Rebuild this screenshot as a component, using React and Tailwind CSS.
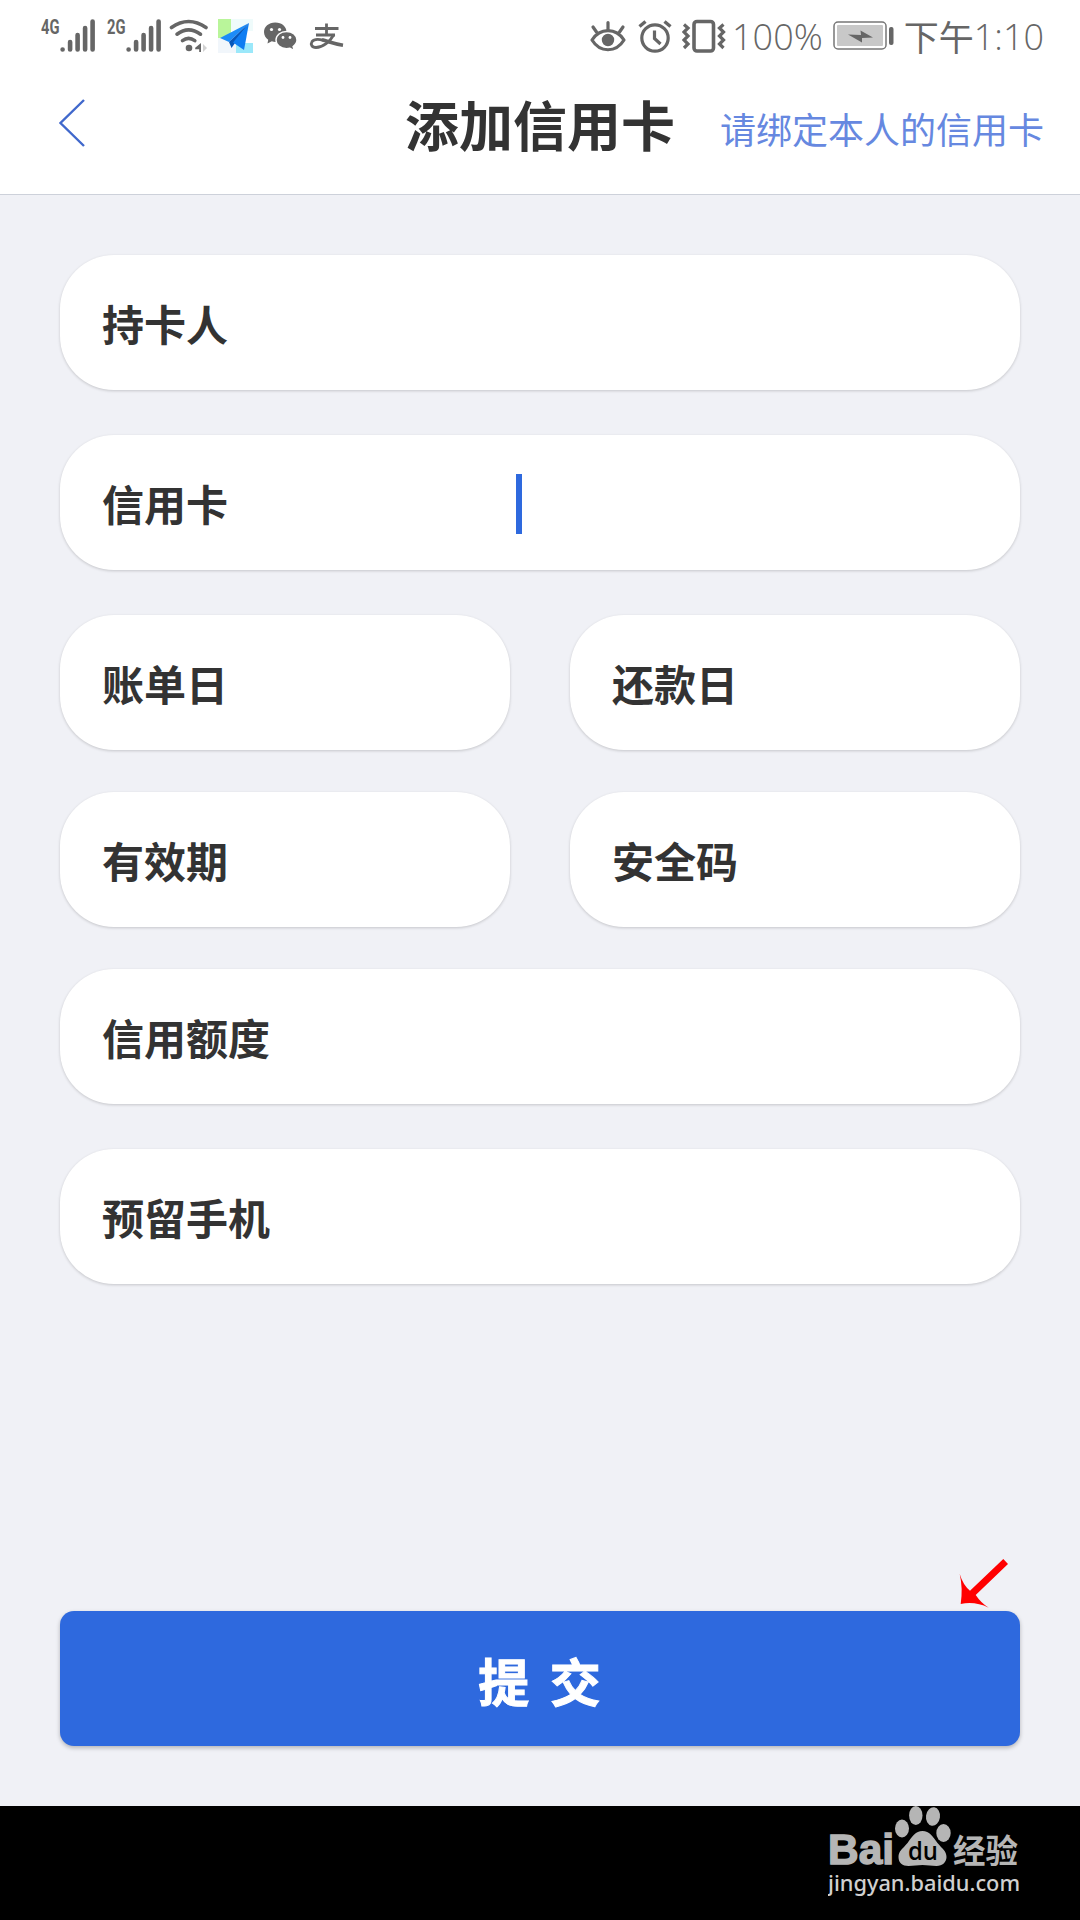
const CJK = "font-['Noto_Sans_CJK_SC',sans-serif]";
const G = "#666666";

function Signal({ label }) {
  return (
    <svg className="overflow-visible" width="56" height="36" viewBox="0 0 56 36" fill="none">
      <text x="0" y="16" fontFamily="Roboto, sans-serif" fontSize="21" fontWeight="700" fill={G} textLength="18.5" lengthAdjust="spacingAndGlyphs">
        {label}
      </text>
      <g stroke={G} strokeWidth="4.6" strokeLinecap="round">
        <path d="M21.600 31.500v0M29.100 24v7.500M36.600 17v14.500M44.100 10v21.500M51.600 3.500v28" />
      </g>
    </svg>
  );
}

function Wifi() {
  return (
    <svg width="40" height="36" viewBox="0 0 40 36" fill="none">
      <g stroke={G} strokeWidth="3.6" strokeLinecap="round">
        <path d="M2.5 9.5Q19.500 -2.500 37 9.500" />
        <path d="M8 16.200Q19.500 7.500 31.500 16.200" />
        <path d="M13.500 22.600Q19.500 18 25.800 22.600" />
      </g>
      <circle cx="20" cy="30" r="3.300" fill={G} />
      <path d="M32 25v9h-1.800v-2.800h-4v-1.500z" fill={G} />
      <path d="M34 26l4 4-4 4z" fill="#d2d2d2" />
    </svg>
  );
}

function Plane() {
  return (
    <svg width="36" height="36" viewBox="0 0 36 36">
      <rect x="0" y="1" width="13" height="19" fill="#b9f59a" />
      <rect x="13" y="1" width="22" height="12" fill="#effbfb" />
      <rect x="0" y="20" width="18" height="15" fill="#f1f6fb" />
      <rect x="18" y="25" width="17" height="10" fill="#9be8fa" />
      <path d="M31 5L2 20l9 4z" fill="#1c8cf8" />
      <path d="M31 5L11 24l2.500 6 3.500-5z" fill="#0757b8" />
      <path d="M31 5L15 24.500l11 7.500z" fill="#0f7df2" />
    </svg>
  );
}

function WeChat() {
  return (
    <svg width="36" height="32" viewBox="0 0 36 32">
      <path fill={G} d="M12.200 2.500C5.600 2.500 1 6.900 1 12c0 3.300 1.700 6 4.200 7.800L4.500 23.500l4.300-2.200c1.200.4 2.400.6 3.600.6C19 21.900 23.500 17.300 23.500 12S19 2.500 12.200 2.500z" />
      <path fill={G} stroke="#fff" strokeWidth="1.400" d="M23.500 11.500c-6 0-10.500 3.900-10.500 8.600 0 4.700 4.500 8.600 10.500 8.600 1.200 0 2.400-.2 3.500-.5l4.200 2.400-1.100-4.100c2.300-1.600 3.900-3.900 3.900-6.400 0-4.700-4.500-8.600-10.500-8.600z" />
      <g fill="#fff">
        <circle cx="8.500" cy="9.500" r="1.600" /><circle cx="16.500" cy="9.500" r="1.600" />
        <circle cx="20" cy="17.500" r="1.400" /><circle cx="27" cy="17.500" r="1.400" />
      </g>
    </svg>
  );
}

function Alipay() {
  return (
    <svg width="36" height="30" viewBox="0 0 36 30" fill="none" stroke={G} strokeWidth="2.800">
      <path d="M6 7.500h23.500M17.500 2.500v12M7 14h19" />
      <path d="M25 13.500C21 20.500 14 26.500 7 26.500 2.500 26.500 1.500 23 3 20.700 5 18 9.500 18 14 19.200" />
      <path d="M13 18.800c7 1.800 12 4 21 5.400" strokeWidth="3.600" />
    </svg>
  );
}

function Eye() {
  return (
    <svg width="36" height="34" viewBox="0 0 36 34" fill="none" stroke={G} strokeWidth="3.200" strokeLinecap="round" strokeLinejoin="round">
      <path d="M2 21C10 8.500 26 8.500 34 21 26 34 10 34 2 21z" />
      <path d="M18 3.500v7M3 8l3.500 5M33 8l-3.500 5" />
      <circle cx="18" cy="21" r="4.600" fill={G} />
    </svg>
  );
}

function Alarm() {
  return (
    <svg width="34" height="34" viewBox="0 0 34 34" fill="none" stroke={G} strokeWidth="3.200">
      <circle cx="17" cy="19" r="13.200" />
      <path d="M16.500 11.500v8l6 5.500" />
      <path d="M1.500 7.500l6-5M32.500 7.500l-6-5" strokeWidth="3.400" />
    </svg>
  );
}

function Vibrate() {
  return (
    <svg width="44" height="34" viewBox="0 0 44 34" fill="none" stroke={G} strokeWidth="3.200">
      <rect x="12" y="2.500" width="19.500" height="29.500" rx="3" strokeWidth="3.600" />
      <path d="M2 5.500l4 3.500-4 4 4 4-4 4 4 4-4 4M41.500 5.500l-4 3.500 4 4-4 4 4 4-4 4 4 4" />
    </svg>
  );
}

function Battery() {
  return (
    <svg width="62" height="30" viewBox="0 0 62 30">
      <rect x="1" y="1" width="52" height="27" rx="4" fill="#fff" stroke="#777" strokeWidth="1.500" />
      <rect x="4" y="4" width="46" height="21" rx="1" fill="#c8c8c8" />
      <path d="M15 13.500l13 .5-.5-4.500 12.500 7-11 .5 0 4.500z" fill={G} />
      <rect x="56" y="6" width="4.500" height="18" rx="2" fill={G} />
    </svg>
  );
}

function Field({ label, cursor }) {
  return (
    <div className="flex h-[135px] min-w-0 flex-1 items-center rounded-[54px] bg-white pl-[42px] shadow-[0_1px_3px_rgba(0,0,0,0.18)]">
      <span className="w-[414px] min-w-0 text-[42px] leading-none font-bold text-[#333]">{label}</span>
      {cursor && <span className="mt-[2px] h-[60px] w-[6px] bg-[#2e69de]" />}
    </div>
  );
}

function Watermark() {
  return (
    <svg width="200" height="94" viewBox="0 0 200 94">
      <g fill="#b5b5b5">
        <text x="0" y="58" fontFamily="'Liberation Sans', sans-serif" fontSize="43" fontWeight="700" stroke="#b5b5b5" strokeWidth="1.500" textLength="66" lengthAdjust="spacingAndGlyphs">Bai</text>
        <ellipse cx="74" cy="22.500" rx="7" ry="9" />
        <ellipse cx="87.800" cy="9.500" rx="6.700" ry="9.500" />
        <ellipse cx="105" cy="10.500" rx="7" ry="9.300" transform="rotate(8 105 10.500)" />
        <ellipse cx="115.500" cy="27" rx="7.200" ry="9" />
        <path d="M94.500 25c-7 0-10 5-15 12-5 6-9 8-9 14 0 6 4 9 10 9 5 0 9-1 14-1s9 1 14 1c6 0 10-4 10-9 0-6-4-8-9-14-5-7-8-12-15-12z" />
        <text x="125" y="57" fontFamily="'Noto Sans CJK SC', sans-serif" fontSize="33" fontWeight="700" textLength="65" lengthAdjust="spacingAndGlyphs">经验</text>
      </g>
      <text x="80" y="54" fontFamily="'Open Sans', sans-serif" fontSize="25" fontWeight="600" fill="#000" textLength="30" lengthAdjust="spacingAndGlyphs">du</text>
      <text x="0" y="84.500" fontFamily="'Noto Sans', sans-serif" fontSize="22" fontWeight="500" fill="#d0d0d0" textLength="192" lengthAdjust="spacingAndGlyphs">jingyan.baidu.com</text>
    </svg>
  );
}

export default function App() {
  return (
    <div className={"flex h-[1920px] w-[1080px] flex-col overflow-hidden bg-[#f0f1f6] " + CJK}>
      <div className="flex h-[72px] items-center bg-white pr-[36px] pl-[41px]">
        <div className="flex items-center">
          <Signal label="4G" />
          <div className="ml-[10px]"><Signal label="2G" /></div>
          <div className="ml-[6px]"><Wifi /></div>
          <div className="ml-[9px]"><Plane /></div>
          <div className="ml-[9px]"><WeChat /></div>
          <div className="ml-[10px]"><Alipay /></div>
        </div>
        <div className="ml-auto flex items-center text-[36px] leading-none text-[#666]">
          <Eye />
          <div className="ml-[12px]"><Alarm /></div>
          <div className="ml-[10px]"><Vibrate /></div>
          <span className="ml-[6px] pt-[2px] font-['Open_Sans',sans-serif] font-light">100%</span>
          <div className="ml-[10px]"><Battery /></div>
          <span className="ml-[9px] pb-[2px] text-[35px]">下午</span>
          <span className="pt-[2px] font-['Open_Sans',sans-serif] font-light">1:10</span>
        </div>
      </div>

      <div className="grid h-[123px] grid-cols-[400px_1fr_auto] border-b border-[#cdd1da] bg-white pr-[36px]">
        <svg className="mt-[26px] ml-[58px]" width="30" height="52" viewBox="0 0 30 52" fill="none">
          <path d="M26 2L2.500 25 26 48" stroke="#4068cc" strokeWidth="2.400" />
        </svg>
        <h1 className="pt-[25px] pl-[5px] text-[54px] leading-[54px] font-bold text-[#333]">添加信用卡</h1>
        <span className="pt-[38px] text-[36px] leading-[36px] text-[#6688e0]">请绑定本人的信用卡</span>
      </div>

      <div className="flex flex-1 flex-col px-[60px] pt-[60px]">
        <div className="mb-[45px] flex"><Field label="持卡人" /></div>
        <div className="mb-[45px] flex"><Field label="信用卡" cursor /></div>
        <div className="mb-[42px] grid grid-cols-2 gap-[60px]"><Field label="账单日" /><Field label="还款日" /></div>
        <div className="mb-[42px] grid grid-cols-2 gap-[60px]"><Field label="有效期" /><Field label="安全码" /></div>
        <div className="mb-[45px] flex"><Field label="信用额度" /></div>
        <div className="flex"><Field label="预留手机" /></div>
        <button className="relative mt-auto mb-[60px] flex h-[135px] items-center justify-center rounded-[14px] bg-[#2e69de] text-[51px] leading-none font-bold text-white shadow-[0_2px_4px_rgba(0,0,0,0.25)]">
          <span className="pt-[4px] pr-px [-webkit-text-stroke:1px_white] [word-spacing:9px]">提 交</span>
          <svg className="absolute top-[-53px] right-[10px]" width="52" height="52" viewBox="0 0 52 52">
            <path d="M45.300 1L50 6 17.700 37Q23 45 30.700 49.700 17 43 2.700 46 5 30 1.700 16 5 27 12 32.700z" fill="#f00" />
          </svg>
        </button>
      </div>

      <div className="flex h-[114px] justify-end bg-black pr-[52px]">
        <Watermark />
      </div>
    </div>
  );
}
